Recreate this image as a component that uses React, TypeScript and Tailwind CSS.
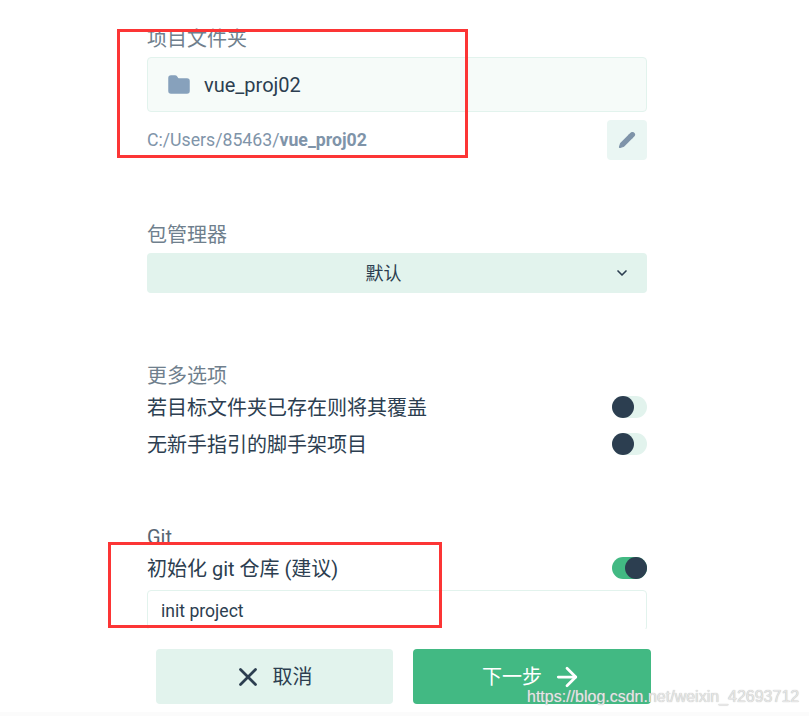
import React from 'react';
import { ArrowRight, ChevronDown, Folder, Pencil, X } from 'lucide-react';

const Toggle = ({ on }: { on?: boolean }) => (
  <div className={`relative h-[22px] w-[35px] rounded-full ${on ? 'bg-[#42b983]' : 'bg-[#e2f3ed]'}`}>
    <div className={`absolute top-0 size-[22px] rounded-full bg-[#2c3e50] ${on ? 'right-0' : 'left-0'}`} />
  </div>
);

const Row = ({ label, on }: { label: string; on?: boolean }) => (
  <div className="flex h-[37px] items-center justify-between text-[20px] text-[#2c3e50]">
    <span className="pt-[2px]">{label}</span>
    <Toggle on={on} />
  </div>
);

const App: React.FC = () => {
  return (
    <div className="relative flex h-[716px] w-[809px] flex-col overflow-hidden bg-white font-['Roboto','Noto_Sans_CJK_SC',sans-serif]">
      <main className="h-[629px] shrink-0 overflow-hidden pl-[147px] pr-[162px] pt-[25px]">
        <div className="h-[28px] text-[20px] leading-[28px] text-[#6f7f8d]">项目文件夹</div>
        <div className="mt-[4px] flex h-[55px] items-center rounded border border-[#e2f3ed] bg-[#f6fbf9] pl-[19px] text-[20px] text-[#2c3e50]">
          <Folder className="size-[24px] fill-[#87a1bc] text-[#87a1bc]" strokeWidth={1.5} />
          <span className="ml-[13px]">vue_proj02</span>
        </div>
        <div className="mt-[8px] flex h-[40px] items-center justify-between">
          <div className="text-[17.7px] text-[#7f94a9]">
            C:/Users/85463/<span className="font-bold">vue_proj02</span>
          </div>
          <button className="flex size-[40px] items-center justify-center rounded bg-[#eaf6f3]">
            <Pencil className="size-[18px] fill-[#7f94a9] text-[#7f94a9]" strokeWidth={1.5} />
          </button>
        </div>

        <div className="mt-[61px] h-[28px] text-[20px] leading-[28px] text-[#6f7f8d]">包管理器</div>
        <div className="relative mt-[4px] flex h-[40px] items-center justify-center rounded bg-[#e2f3ed] pr-[27px] text-[18px] text-[#2c3e50]">
          默认
          <ChevronDown className="absolute right-[17px] size-[16px] text-[#2c3e50]" strokeWidth={2.5} />
        </div>

        <div className="mt-[69px] h-[28px] text-[20px] leading-[28px] text-[#6f7f8d]">更多选项</div>
        <div className="-mt-[2px]">
          <Row label="若目标文件夹已存在则将其覆盖" />
          <Row label="无新手指引的脚手架项目" />
        </div>

        <div className="mt-[61px] h-[26px] text-[20px] leading-[28px] text-[#566573]">Git</div>
        <Row label="初始化 git 仓库 (建议)" on />
        <div className="mt-[4px] flex h-[41px] items-center rounded border border-[#e2f3ed] pl-[13px] pt-[2px] text-[17.6px] text-[#2c3e50]">
          init project
        </div>
      </main>

      <footer className="flex flex-1 items-start pl-[156px] pt-[20px]">
        <button className="flex h-[55px] w-[237px] items-center justify-center gap-[10px] rounded bg-[#e2f3ed] pr-[4px] text-[20px] text-[#2c3e50]">
          <X className="size-[30px]" strokeWidth={2.2} />
          取消
        </button>
        <button className="ml-[20px] flex h-[55px] w-[238px] items-center justify-center gap-[10px] rounded bg-[#42b983] text-[20px] text-white">
          下一步
          <ArrowRight className="size-[30px]" strokeWidth={2.2} />
        </button>
      </footer>
      <div className="absolute bottom-0 left-0 h-[4px] w-full bg-[#fbfbfb]" />

      {/* annotation boxes and watermark on top of the screenshot */}
      <div className="pointer-events-none absolute left-[117px] top-[29px] h-[129px] w-[351px] border-[3px] border-[#fc3535]" />
      <div className="pointer-events-none absolute left-[108px] top-[542px] h-[86px] w-[334px] border-[3px] border-[#fc3535]" />
      <div className="absolute left-[527px] top-[686px] font-['Liberation_Sans',sans-serif] text-[16px] leading-[22px] text-[#e6e6e6] [text-shadow:0_0_1px_#a8a8a8]">
        https://blog.csdn.net/weixin_42693712
      </div>
    </div>
  );
};

export default App;
